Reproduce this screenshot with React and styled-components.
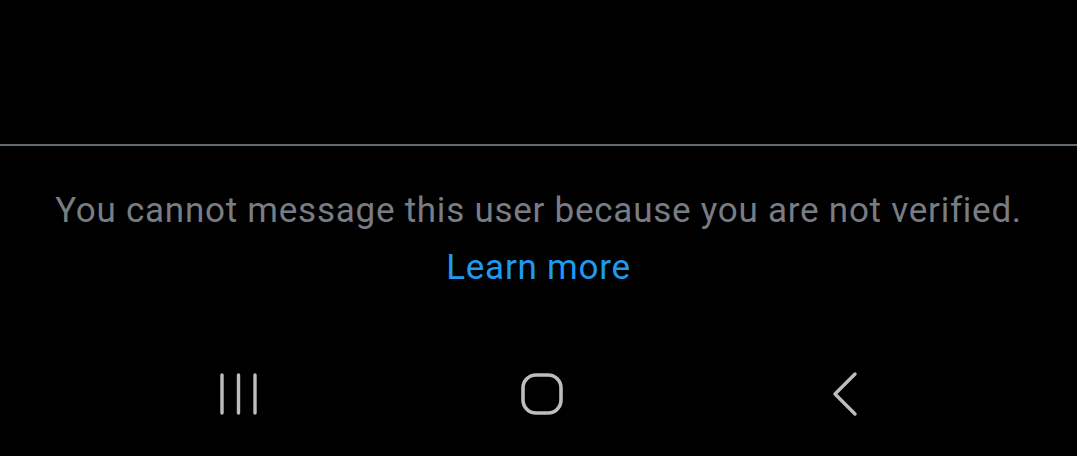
import React from "react";
import styled, { createGlobalStyle } from "styled-components";

const Global = createGlobalStyle`
  html, body {
    margin: 0;
    padding: 0;
    background: #000;
  }
  body {
    font-family: Roboto, "Noto Sans", "Liberation Sans", sans-serif;
  }
`;

const Screen = styled.div`
  width: 1077px;
  height: 456px;
  background: #000;
  display: flex;
  flex-direction: column;
  overflow: hidden;
`;

const TopArea = styled.div`
  height: 144px;
  flex-shrink: 0;
`;

const Divider = styled.div`
  height: 2px;
  background: #626b73;
`;

const Notice = styled.div`
  display: flex;
  flex-direction: column;
  align-items: center;
  padding-top: 43px;
  text-align: center;
`;

const Message = styled.p`
  margin: 0;
  font-size: 35px;
  line-height: 44px;
  color: #787d84;
  letter-spacing: 0.75px;
  white-space: nowrap;
`;

const LearnMore = styled.a`
  margin-top: 13px;
  font-size: 35px;
  line-height: 44px;
  color: #1d9bf0;
  letter-spacing: 0.75px;
  text-decoration: none;
  cursor: pointer;
`;

const NavBar = styled.div`
  margin-top: auto;
  height: 96px;
  display: flex;
  align-items: flex-start;
  gap: 233px;
  padding: 4px 0 0 204px;
  box-sizing: border-box;
`;

const NavButton = styled.div`
  width: 70px;
  height: 60px;
  display: flex;
  align-items: center;
  justify-content: center;
  color: #bdbdbd;
`;

function RecentsIcon() {
  return (
    <svg width="44" height="42" viewBox="0 0 44 42" fill="none">
      <g stroke="currentColor" strokeWidth="3.4" strokeLinecap="round">
        <line x1="5" y1="2" x2="5" y2="40" />
        <line x1="21.5" y1="2" x2="21.5" y2="40" />
        <line x1="38" y1="2" x2="38" y2="40" />
      </g>
    </svg>
  );
}

function HomeIcon() {
  return (
    <svg width="44" height="44" viewBox="0 0 44 44" fill="none">
      <rect x="3" y="3" width="38" height="38" rx="13" stroke="currentColor" strokeWidth="3.6" />
    </svg>
  );
}

function BackIcon() {
  return (
    <svg width="28" height="46" viewBox="0 0 28 46" fill="none">
      <polyline points="24,3 4,23 24,43" stroke="currentColor" strokeWidth="3.4" strokeLinecap="round" strokeLinejoin="round" />
    </svg>
  );
}

export default function App() {
  return (
    <>
      <Global />
      <Screen>
        <TopArea />
        <Divider />
        <Notice>
          <Message>You cannot message this user because you are not verified.</Message>
          <LearnMore>Learn more</LearnMore>
        </Notice>
        <NavBar>
          <NavButton><RecentsIcon /></NavButton>
          <NavButton><HomeIcon /></NavButton>
          <NavButton><BackIcon /></NavButton>
        </NavBar>
      </Screen>
    </>
  );
}
